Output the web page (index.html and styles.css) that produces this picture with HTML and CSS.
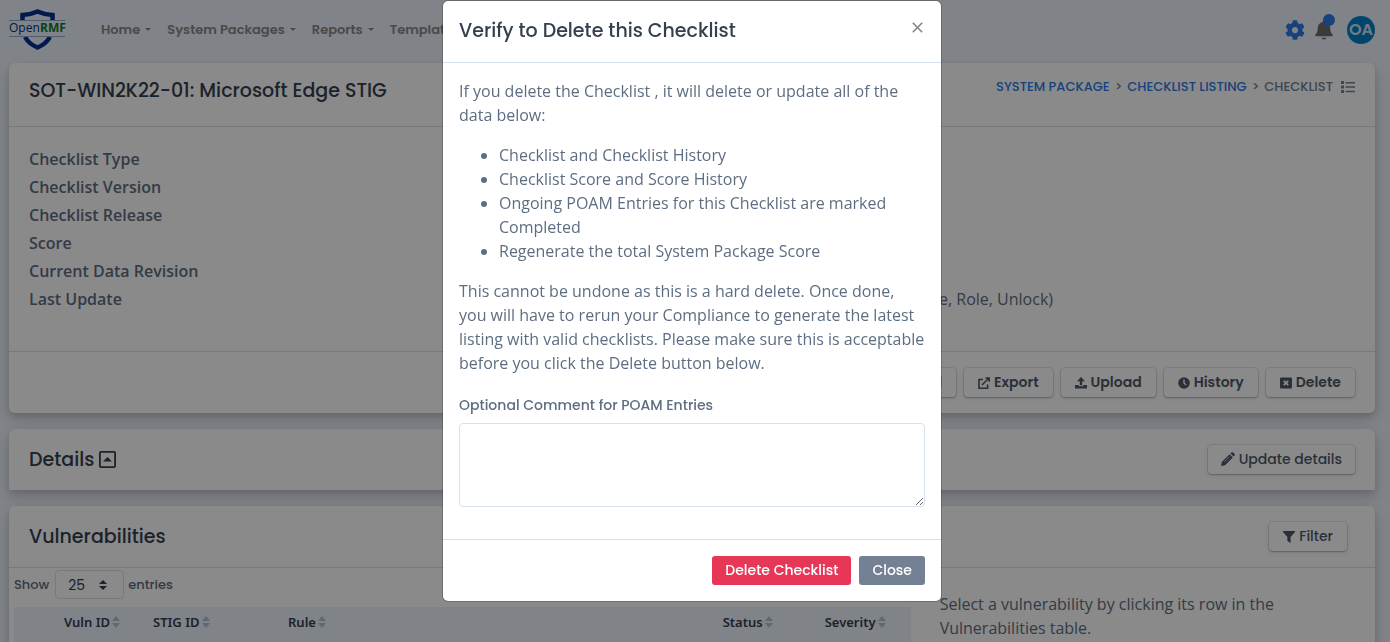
FILE: index.html
```html
<!DOCTYPE html>
<html lang="en">
<head>
<meta charset="utf-8">
<title>OpenRMF - Checklist</title>
<link rel="stylesheet" href="styles.css">
</head>
<body>
<div class="page">
  <nav class="topbar">
    <a class="brand" href="#" aria-label="OpenRMF">
      <svg width="60" height="42" viewBox="0 0 60 42">
        <path d="M13.500 11V6Q22 5.500 28.500 2.500Q35 5.500 43.500 6V11" fill="none" stroke="#00308f" stroke-width="4.500"/>
        <path d="M16 28Q20 35 28.500 38.500Q37 35 41 28" fill="none" stroke="#00308f" stroke-width="4.500"/>
        <path d="M0 11.500H56M0 27.500H56" stroke="#8ea8d4" stroke-width="1.200"/>
        <text x="0" y="23" class="brand-open">Open</text>
        <text x="31" y="23" class="brand-rmf">RMF</text>
      </svg>
    </a>
    <ul class="menu">
      <li><a href="#">Home<i class="caret"></i></a></li>
      <li><a href="#">System Packages<i class="caret"></i></a></li>
      <li><a href="#">Reports<i class="caret"></i></a></li>
      <li><a href="#">Templates<i class="caret"></i></a></li>
    </ul>
    <div class="tools">
      <a class="tool" href="#" aria-label="Settings">
        <svg width="20" height="20" viewBox="0 0 512 512" fill="#2c7be5"><path d="M487.400 315.700l-42.600-24.600c4.300-23.200 4.300-47 0-70.200l42.600-24.600c4.900-2.800 7.100-8.600 5.500-14-11.100-35.600-30-67.800-54.700-94.600-3.800-4.100-10-5.100-14.800-2.300L380.800 110c-17.900-15.400-38.500-27.300-60.800-35.100V25.800c0-5.600-3.900-10.500-9.400-11.700-36.700-8.200-74.300-7.800-109.200 0-5.500 1.200-9.400 6.100-9.400 11.700V75c-22.200 7.900-42.800 19.800-60.800 35.100L88.700 85.500c-4.900-2.800-11-1.900-14.800 2.300-24.700 26.700-43.600 58.900-54.700 94.600-1.700 5.400.6 11.200 5.500 14L67.300 221c-4.300 23.200-4.300 47 0 70.200l-42.600 24.600c-4.900 2.800-7.100 8.600-5.500 14 11.100 35.600 30 67.800 54.700 94.600 3.800 4.100 10 5.100 14.800 2.300l42.600-24.600c17.900 15.400 38.500 27.300 60.800 35.100v49.200c0 5.600 3.900 10.500 9.400 11.700 36.700 8.200 74.300 7.800 109.200 0 5.500-1.200 9.400-6.100 9.400-11.700v-49.200c22.200-7.900 42.800-19.800 60.800-35.100l42.600 24.600c4.900 2.800 11 1.900 14.800-2.300 24.700-26.700 43.600-58.900 54.700-94.600 1.500-5.500-.7-11.300-5.600-14.100zM256 336c-44.100 0-80-35.900-80-80s35.900-80 80-80 80 35.900 80 80-35.900 80-80 80z"/></svg>
      </a>
      <a class="tool bell" href="#" aria-label="Notifications">
        <svg width="18" height="20" viewBox="0 0 448 512" fill="#6e6e6e"><path d="M160 455H288Q283 499 224 502Q165 499 160 455zM224 0c-18 0-32 14-32 32v20.800C118.600 68.100 64.100 130.300 64.100 208c0 102.300-36.200 133.500-55.500 154.300-18 20-5 53.700 23.500 53.700h383.800c28 0 42-33 23.500-53.700-19.300-20.800-55.500-52-55.500-154.300 0-77.700-54.500-139.900-127.900-155.200V32c0-18-14-32-32-32z"/></svg>
        <span class="dot"></span>
      </a>
      <a class="avatar" href="#">OA</a>
    </div>
  </nav>

  <main class="cards">
    <section class="card">
      <header class="card-head title-head">
        <h1>SOT-WIN2K22-01: Microsoft Edge STIG</h1>
        <div class="crumbs">
          <a href="#">SYSTEM PACKAGE</a><span>&gt;</span><a href="#">CHECKLIST LISTING</a><span>&gt;</span><span>CHECKLIST</span>
          <svg width="14" height="12" viewBox="0 0 14 12" fill="#748194"><path d="M0 0h3v3H0zM0 4.500h3v3H0zM0 9h3v3H0zM4.500 1h9.500v1.400H4.500zM4.500 5.300h9.500v1.400H4.500zM4.500 9.800h9.500v1.400H4.500z"/></svg>
        </div>
      </header>
      <dl class="facts">
        <dt>Checklist Type</dt><dd></dd>
        <dt>Checklist Version</dt><dd></dd>
        <dt>Checklist Release</dt><dd></dd>
        <dt>Score</dt><dd></dd>
        <dt>Current Data Revision</dt><dd></dd>
        <dt>Last Update</dt><dd>e, Role, Unlock)</dd>
      </dl>
      <footer class="card-foot">
        <button class="btn strong" type="button">Excel</button>
        <button class="btn strong" type="button"><svg width="12" height="12" viewBox="0 0 12 12" fill="none" stroke="currentColor" stroke-width="1.600"><path d="M5 2.500H1V11.200H9.600V7.500M4 8L10.500 1.500M7.500 1H11.200V4.700"/></svg>Export</button>
        <button class="btn strong" type="button"><svg width="12" height="12" viewBox="0 0 12 12" fill="currentColor"><path d="M6 0L10 4.200H7.200V8.200H4.800V4.200H2zM0 8h3.700v1.200h4.600V8H12v3.500H0z"/></svg>Upload</button>
        <button class="btn strong" type="button"><svg width="12" height="12" viewBox="0 0 12 12"><circle cx="6" cy="6" r="5.800" fill="currentColor"/><path d="M6 2.500V6L8 8" fill="none" stroke="#fff" stroke-width="1.400"/></svg>History</button>
        <button class="btn strong" type="button"><svg width="12" height="12" viewBox="0 0 12 12"><rect y="0.500" width="12" height="11" rx="1" fill="currentColor"/><path d="M3.800 3.800L8.200 8.200M8.200 3.800L3.800 8.200" stroke="#fff" stroke-width="1.800"/></svg>Delete</button>
      </footer>
    </section>

    <section class="card flat">
      <header class="card-head">
        <h2>Details <svg class="toggle" width="17" height="17" viewBox="0 0 17 17"><rect x="0.900" y="0.900" width="15.200" height="15.200" rx="1" fill="none" stroke="currentColor" stroke-width="1.800"/><path d="M4 10.500L8.500 6L13 10.500z" fill="currentColor"/></svg></h2>
        <button class="btn" type="button"><svg width="14" height="14" viewBox="0 0 14 14" fill="currentColor"><path d="M0 14L.8 10L8.600 2.200L11.800 5.400L4 13.200zM9.400 1.400L10.400.4Q11.200-.3 12 .4L13.600 2Q14.300 2.800 13.600 3.600L12.600 4.600z"/><path d="M3.500 9.700L8.500 4.700" stroke="#fff" stroke-width=".7"/></svg>Update details</button>
      </header>
    </section>

    <section class="card">
      <header class="card-head filter-head">
        <h2>Vulnerabilities</h2>
        <button class="btn wide" type="button"><svg width="12" height="12" viewBox="0 0 12 12" fill="currentColor"><path d="M0 0H12V1L7.600 6V12L4.400 10V6L0 1z"/></svg>Filter</button>
      </header>
      <div class="split">
        <div class="list">
          <label class="length">Show
            <span class="picker"><select><option>25</option></select><svg width="8" height="10" viewBox="0 0 8 10" fill="#344050"><path d="M0 4L4 0L8 4zM0 6H8L4 10z"/></svg></span>
            entries</label>
          <table class="grid">
            <colgroup><col class="c-pick"><col class="c-vuln"><col class="c-stig"><col><col class="c-status"><col class="c-sev"></colgroup>
            <thead><tr>
              <th></th>
              <th>Vuln ID<svg class="sort" viewBox="0 0 8 12"><path d="M0 5L4 0L8 5zM0 7H8L4 12z"/></svg></th>
              <th>STIG ID<svg class="sort" viewBox="0 0 8 12"><path d="M0 5L4 0L8 5zM0 7H8L4 12z"/></svg></th>
              <th>Rule<svg class="sort" viewBox="0 0 8 12"><path d="M0 5L4 0L8 5zM0 7H8L4 12z"/></svg></th>
              <th>Status<svg class="sort" viewBox="0 0 8 12"><path d="M0 5L4 0L8 5zM0 7H8L4 12z"/></svg></th>
              <th>Severity<svg class="sort" viewBox="0 0 8 12"><path d="M0 5L4 0L8 5zM0 7H8L4 12z"/></svg></th>
            </tr></thead>
          </table>
        </div>
        <p class="hint">Select a vulnerability by clicking its row in the Vulnerabilities table.</p>
      </div>
    </section>
  </main>
</div>

<div class="backdrop">
  <div class="modal" role="dialog" aria-modal="true" aria-labelledby="modal-title">
    <header class="modal-head">
      <h2 id="modal-title">Verify to Delete this Checklist</h2>
      <button class="dismiss" type="button" aria-label="Close dialog"><svg width="11" height="11" viewBox="0 0 11 11" stroke="#858585" stroke-width="1.600"><path d="M.8.8L10.200 10.200M10.200.8L.8 10.200"/></svg></button>
    </header>
    <div class="modal-body">
      <p>If you delete the Checklist , it will delete or update all of the data below:</p>
      <ul>
        <li>Checklist and Checklist History</li>
        <li>Checklist Score and Score History</li>
        <li>Ongoing POAM Entries for this Checklist are marked Completed</li>
        <li>Regenerate the total System Package Score</li>
      </ul>
      <p>This cannot be undone as this is a hard delete. Once done, you will have to rerun your Compliance to generate the latest listing with valid checklists. Please make sure this is acceptable before you click the Delete button below.</p>
      <label for="comment">Optional Comment for POAM Entries</label>
      <textarea id="comment" rows="3"></textarea>
    </div>
    <footer class="modal-foot">
      <button class="action danger" type="button">Delete Checklist</button>
      <button class="action muted" type="button">Close</button>
    </footer>
  </div>
</div>
</body>
</html>
```
FILE: styles.css
```css
:root {
  --display: Poppins, Inter, sans-serif;
  --text: "Open Sans", sans-serif;
  --line: #d8e2ef;
  --ink: #344050;
  --body: #5e6e82;
  --blue: #2c7be5;
}
* { box-sizing: border-box; }
html { overflow: hidden; }
body {
  margin: 0;
  background: #edf2f9;
  color: var(--body);
  font: 400 16px/24px var(--text);
}
a { color: var(--blue); text-decoration: none; }
h1, h2 {
  margin: 0;
  color: var(--ink);
  font: 500 19px/24px var(--display);
}
.page { height: 100vh; overflow: hidden; padding: 0 15px 0 9px; }

.topbar { display: flex; align-items: center; height: 63px; padding-bottom: 4px; }
.brand { display: flex; width: 92px; }
.brand-open, .brand-rmf { font: 400 12px "Open Sans", sans-serif; fill: #00308f; }
.brand-rmf { font-weight: 700; fill: #0d7a2e; }
.menu { display: flex; gap: 16px; margin: 0; padding: 0; list-style: none; }
.menu a { display: flex; align-items: center; gap: 5px; color: #888; font: 600 13px/20px var(--display); }
.caret { border: 3px solid transparent; border-top-color: currentColor; border-bottom: 0; }
.tools { display: flex; align-items: center; gap: 10px; margin-left: auto; }
.tool { position: relative; display: flex; }
.bell { margin-right: 4px; }
.dot { position: absolute; top: -6px; right: -2px; width: 12px; height: 12px; border-radius: 50%; background: var(--blue); }
.avatar {
  display: grid;
  place-items: center;
  width: 28px;
  height: 28px;
  border-radius: 50%;
  background: #0082c8;
  color: #d8e2ef;
  font: 600 16px/20px var(--display);
}

.cards { display: grid; gap: 16px; }
.card { border-radius: 6px; background: #fff; box-shadow: 0 7px 14px 0 rgba(65, 69, 88, .2), 0 3px 6px 0 rgba(0, 0, 0, .1); }
.flat { border-radius: 6px 6px 0 0; }
.card-head { display: flex; align-items: center; justify-content: space-between; padding: 16px 20px; }
.title-head { align-items: flex-start; height: 64px; border-bottom: 1px solid var(--line); }
.filter-head { padding-right: 28px; border-bottom: 1px solid var(--line); }
.crumbs { display: flex; align-items: center; gap: 5px; font: 500 13px/16px var(--display); color: #748194; }
.crumbs svg { margin-left: 3px; }
.facts { display: grid; grid-template-columns: 910px 1fr; grid-auto-rows: 28px; margin: 0; padding: 20px 20px 36px; }
.facts dt { font-weight: 600; line-height: 24px; }
.facts dd { margin: 0; }
.card-foot { display: flex; justify-content: flex-end; gap: 8px; padding: 16px 20px; border-top: 1px solid var(--line); }
.btn {
  display: flex;
  align-items: center;
  gap: 4px;
  height: 29px;
  padding: 0 13px 2px;
  border: 0;
  border-radius: 4px;
  background: #fff;
  color: #4d5969;
  font: 500 14px/20px var(--display);
  box-shadow: 0 0 0 1px rgba(43, 45, 80, .1), 0 2px 5px 0 rgba(43, 45, 80, .08), 0 1px 2px 0 rgba(0, 0, 0, .2);
}
.strong { padding: 0 14px 2px; font-weight: 600; }
.wide { padding: 0 14px 2px; }
.strong svg, .wide svg { margin-top: 3px; }
.toggle { vertical-align: -2px; }

.split { display: grid; grid-template-columns: 2fr 1fr; }
.list { padding: 2px 9px 0 5px; }
.length { display: flex; align-items: center; gap: 4px; height: 30px; font: 500 13px/20px var(--display); }
.length { padding-bottom: 1px; }
.picker { position: relative; display: flex; margin-left: 2px; }
.picker select {
  appearance: none;
  width: 69px;
  height: 29px;
  padding: 0 12px;
  border: 1px solid var(--line);
  border-radius: 4px;
  background: #fff;
  color: var(--ink);
  font: 400 14px/20px var(--display);
}
.picker svg { position: absolute; top: 10px; right: 17px; }
.grid { width: 100%; margin-top: 7px; border-collapse: collapse; table-layout: fixed; background: #edf2f9; }
.grid th { height: 36px; padding: 0 0 6px 14px; color: var(--ink); font: 600 13px/20px "Noto Sans", sans-serif; text-align: left; white-space: nowrap; }
.sort { width: 8px; height: 12px; margin-left: 2px; vertical-align: -1px; fill: #b6c1d2; }
.c-pick { width: 36px; }
.c-vuln { width: 89px; }
.c-stig { width: 135px; }
.c-status { width: 102px; }
.c-sev { width: 100px; }
.hint { margin: 0; padding: 24px 20px; }

.backdrop {
  position: fixed;
  inset: 0;
  display: flex;
  align-items: flex-start;
  justify-content: center;
  padding-right: 6px;
  background: rgba(0, 0, 0, .46);
}
.modal {
  width: 500px;
  border: 1px solid rgba(0, 0, 0, .2);
  border-radius: 6px;
  background: #fff;
  background-clip: padding-box;
}
.modal-head { display: flex; align-items: flex-start; justify-content: space-between; padding: 15px 16px 16px; border-bottom: 1px solid var(--line); }
.modal-head h2 { line-height: 30px; }
.dismiss { display: flex; padding: 6px 2px; border: 0; background: none; }
.modal-body { padding: 16px 16px 32px; }
.modal-body p, .modal-body ul { margin: 0 0 16px; }
.modal-body ul { padding-left: 40px; }
.modal-body label { display: block; margin-bottom: 8px; padding-top: 4px; font: 500 14px/20px var(--display); }
.modal-body textarea { display: block; width: 100%; height: 84px; border: 1px solid var(--line); border-radius: 4px; font: 400 16px/24px var(--text); resize: vertical; }
.modal-foot { display: flex; justify-content: flex-end; gap: 8px; padding: 16px; border-top: 1px solid var(--line); }
.action { height: 29px; padding: 0 13px 2px; border: 0; border-radius: 3px; color: #fff; font: 500 14px/20px var(--display); }
.danger { background: #e63757; }
.muted { background: #748194; }
```
